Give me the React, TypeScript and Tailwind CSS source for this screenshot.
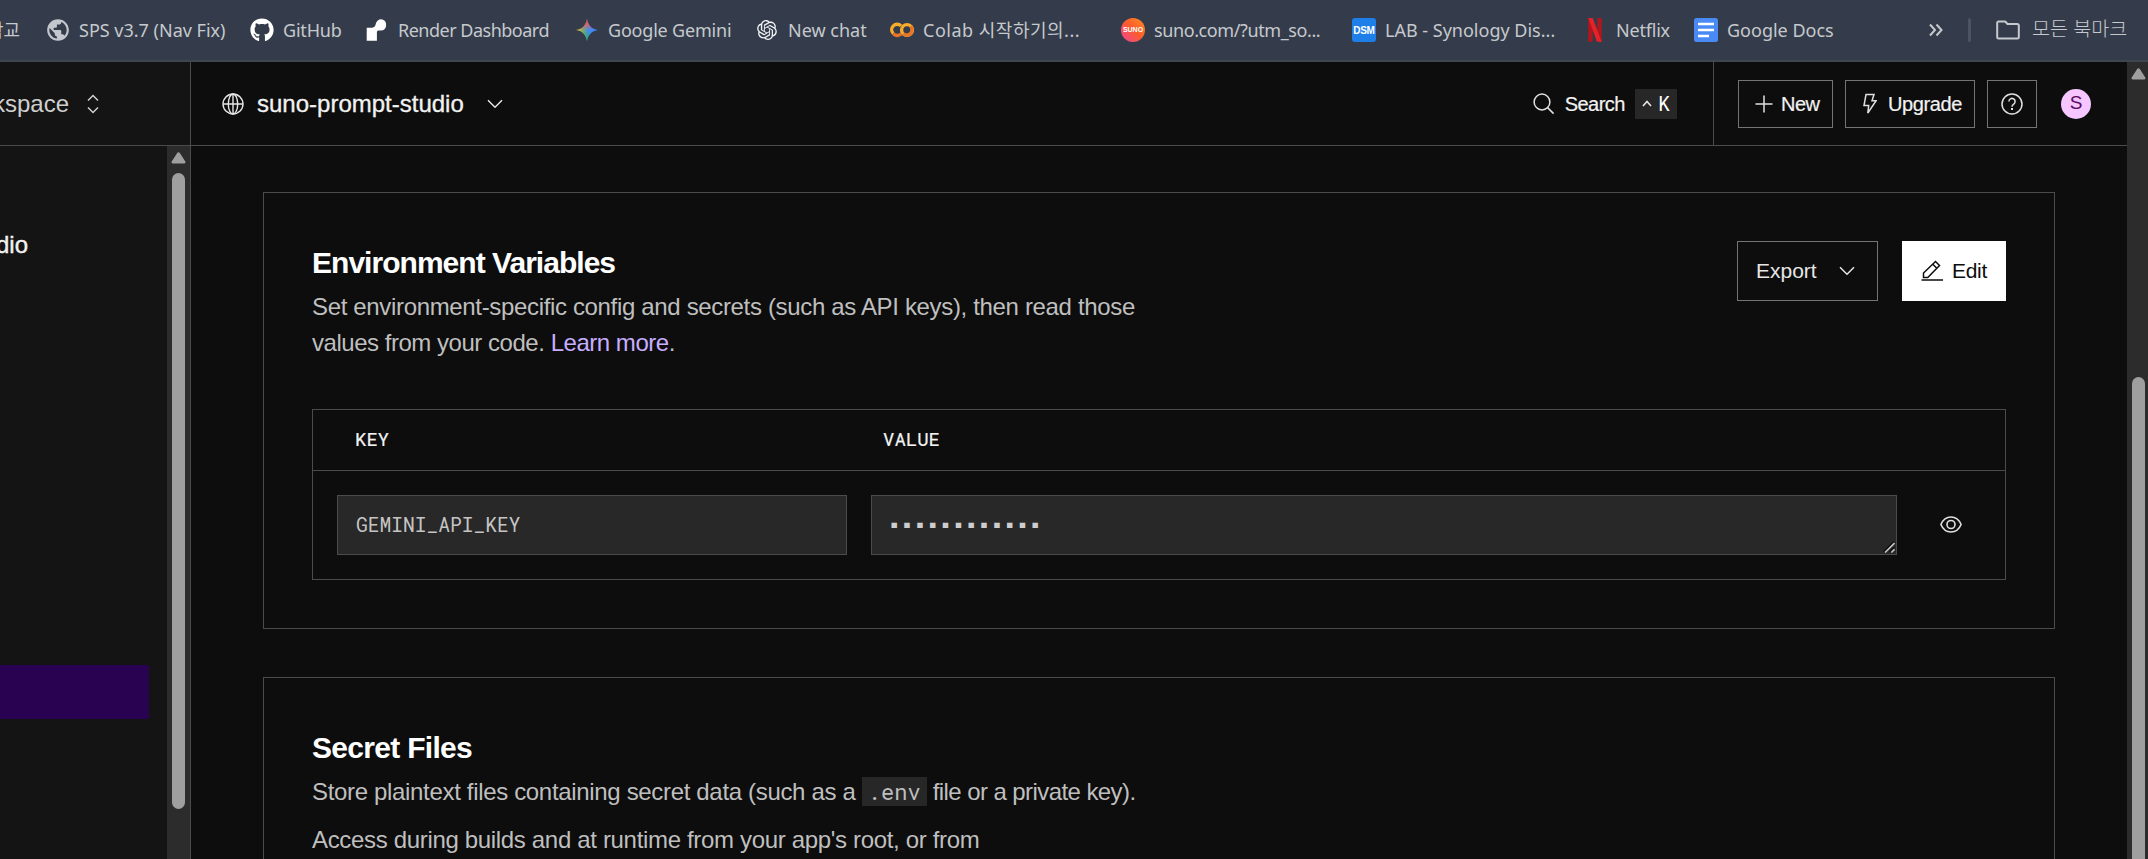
import type { ReactNode } from "react";
import { FaGithub } from "react-icons/fa";
import { MdPublic } from "react-icons/md";
import { RiOpenaiFill } from "react-icons/ri";

function RenderLogo() {
  return (
    <svg width="22" height="22" viewBox="0 0 22 22" fill="#fff">
      <path d="M15.500 0.300a5.900 5.900 0 0 0-5.900 5.200c-.3 1.800-1.500 3-3.400 3.200H0.700V21.700h10.200V13.200c0-1 .8-1.700 1.800-1.700h2.800a5.700 5.700 0 0 0 0-11.200z" />
    </svg>
  );
}

function GeminiLogo() {
  return (
    <svg width="22" height="24" viewBox="0 0 22 24">
      <defs>
        <linearGradient id="gem-base" x1="0" y1="0.500" x2="1" y2="0.500">
          <stop offset="0" stopColor="#f5c028" />
          <stop offset="0.350" stopColor="#6fa87a" />
          <stop offset="0.550" stopColor="#3f8cf0" />
          <stop offset="1" stopColor="#3a86ff" />
        </linearGradient>
        <linearGradient id="gem-red" x1="0.500" y1="0" x2="0.500" y2="0.500">
          <stop offset="0" stopColor="#f0433f" />
          <stop offset="0.500" stopColor="#ee5b55" stopOpacity="0.800" />
          <stop offset="1" stopColor="#ee5b55" stopOpacity="0" />
        </linearGradient>
        <linearGradient id="gem-green" x1="0.500" y1="1" x2="0.500" y2="0.550">
          <stop offset="0" stopColor="#2fae55" />
          <stop offset="1" stopColor="#2fae55" stopOpacity="0" />
        </linearGradient>
      </defs>
      {["url(#gem-base)", "url(#gem-red)", "url(#gem-green)"].map((f) => (
        <path key={f} fill={f} d="M11 1c.9 6 4.600 10 11 11-6.400 1-10.100 5-11 11-.9-6-4.600-10-11-11C6.400 11 10.100 7 11 1z" />
      ))}
    </svg>
  );
}

function ColabLogo() {
  return (
    <svg width="24" height="16" viewBox="0 0 24 16" fill="none" strokeWidth="3.400">
      <path d="M11 3.900A5.400 5.400 0 0 0 3.300 11.600" stroke="#f9ab2a" />
      <path d="M3.300 11.600A5.400 5.400 0 0 0 11 12.100" stroke="#e8742a" />
      <circle cx="17" cy="8" r="5.400" stroke="#f9ab2a" />
      <path d="M20.800 4.200A5.400 5.400 0 0 1 13.200 11.800" stroke="#e8742a" />
    </svg>
  );
}

function NetflixLogo() {
  return (
    <svg width="14" height="24" viewBox="0 0 14 24">
      <path d="M0.300 0h4.400v23.500l-4.400.5zM9.300 0h4.400v24l-4.400-.5z" fill="#b1161c" />
      <path d="M0.300 0h4.400l9 24-4.800-.6z" fill="#e5222a" />
    </svg>
  );
}

function DocsLogo() {
  return (
    <svg width="24" height="24" viewBox="0 0 24 24">
      <rect width="24" height="24" rx="2.500" fill="#4a8af4" />
      <path d="M4 6h16M4 12h16M4 18h11" stroke="#fff" strokeWidth="2.400" />
    </svg>
  );
}

const bookmarks: { icon: ReactNode; label: string; box: string; text: string }[] = [
  { icon: <MdPublic size={26} color="#c3c7cd" className="shrink-0" />, label: "SPS v3.7 (Nav Fix)", box: "w-[204px]", text: "" },
  { icon: <FaGithub size={24} color="#fff" />, label: "GitHub", box: "w-[115px]", text: "tracking-[-0.2px]" },
  { icon: <RenderLogo />, label: "Render Dashboard", box: "w-[210px]", text: "tracking-[-0.5px]" },
  { icon: <GeminiLogo />, label: "Google Gemini", box: "w-[180px]", text: "tracking-[-0.2px]" },
  { icon: <RiOpenaiFill size={24} color="#f2f3f5" className="shrink-0" />, label: "New chat", box: "w-[135px]", text: "" },
  { icon: <ColabLogo />, label: "Colab 시작하기의...", box: "w-[231px]", text: "tracking-[0.5px]" },
  {
    icon: (
      <span className="flex size-6 items-center justify-center rounded-full bg-linear-to-tr from-[#f0408c] via-[#fb5a2c] to-[#ff8a20] font-['Liberation_Sans',sans-serif] text-[7px] font-bold text-white">
        SUNO
      </span>
    ),
    label: "suno.com/?utm_so...",
    box: "w-[231px]",
    text: "tracking-[-0.4px]",
  },
  {
    icon: (
      <span className="flex size-6 items-center justify-center rounded-[3px] bg-[#1f7fe8] font-['Liberation_Sans',sans-serif] text-[10px] font-bold tracking-[-0.3px] text-white">
        DSM
      </span>
    ),
    label: "LAB - Synology Dis...",
    box: "w-[231px]",
    text: "",
  },
  { icon: <NetflixLogo />, label: "Netflix", box: "w-[111px]", text: "tracking-[-0.2px]" },
  { icon: <DocsLogo />, label: "Google Docs", box: "w-[235px]", text: "" },
];

function BookmarkBar() {
  return (
    <div className="flex h-[62px] shrink-0 items-center overflow-hidden border-b-2 border-[#3e474f] bg-[#343c4b] font-['Noto_Sans','Noto_Sans_CJK_KR',sans-serif] text-[18px] whitespace-nowrap text-[#c6c9cd]">
      <div className="flex w-[46px] shrink-0">
        <span className="flex w-5 justify-end">학교</span>
      </div>
      {bookmarks.map((b) => (
        <div key={b.label} className={`flex shrink-0 items-center gap-[9px] ${b.box}`}>
          <span className="flex w-6 shrink-0 items-center justify-center">{b.icon}</span>
          <span className={b.text}>{b.label}</span>
        </div>
      ))}
      <svg width="14" height="14" viewBox="0 0 14 14" fill="none" stroke="#c6c9cd" strokeWidth="2">
        <path d="M1 1.500L6 7l-5 5.500M7.500 1.500L12.500 7l-5 5.500" />
      </svg>
      <span className="ml-[25px] h-6 w-[3px] shrink-0 rounded-full bg-[#4b5464]" />
      <svg className="ml-[25px] shrink-0" width="24" height="20" viewBox="0 0 24 20" fill="none" stroke="#c6c9cd" strokeWidth="2" strokeLinejoin="round">
        <path d="M1.200 3.200V17a1.500 1.500 0 0 0 1.500 1.500h18.600a1.500 1.500 0 0 0 1.500-1.500V5.500A1.500 1.500 0 0 0 21.300 4h-9.800L9.200 1.500H2.700a1.500 1.500 0 0 0-1.500 1.700z" />
      </svg>
      <span className="ml-3 pb-[2px] text-[19.6px] font-light">모든 북마크</span>
    </div>
  );
}

function Chevron() {
  return (
    <svg width="16" height="10" viewBox="0 0 16 10" fill="none" stroke="#e6e6e6" strokeWidth="1.500">
      <path d="M1 1.300l7 7 7-7" />
    </svg>
  );
}

function ArrowUp() {
  return (
    <svg className="shrink-0" width="15" height="12" viewBox="0 0 15 12" fill="#9f9f9f">
      <path d="M6.200 0.900a1.500 1.500 0 0 1 2.600 0l5.500 8.700a1.200 1.200 0 0 1-1 1.900H1.700a1.200 1.200 0 0 1-1-1.900z" />
    </svg>
  );
}

function Header() {
  return (
    <header className="flex h-[84px] shrink-0 border-b border-[#4b4b4b] text-[#f2f2f2]">
      <div className="flex flex-1 items-center">
        <svg className="ml-[31px]" width="22" height="22" viewBox="0 0 22 22" fill="none" stroke="#e6e6e6" strokeWidth="1.400">
          <circle cx="11" cy="11" r="10" />
          <ellipse cx="11" cy="11" rx="4.700" ry="10" />
          <path d="M1 11h20M11 1v20" />
        </svg>
        <span className="ml-[13px] text-[24px] [-webkit-text-stroke:0.3px_#f2f2f2]">suno-prompt-studio</span>
        <span className="ml-[23px]">
          <Chevron />
        </span>
        <div className="mr-[36px] ml-auto flex items-center">
          <svg width="22" height="22" viewBox="0 0 22 22" fill="none" stroke="#e0e0e0" strokeWidth="1.500">
            <circle cx="9" cy="9" r="7.900" />
            <path d="M14.600 14.600l6 6" />
          </svg>
          <span className="ml-[10px] text-[20px] tracking-[-0.5px] [-webkit-text-stroke:0.2px_#f2f2f2]">Search</span>
          <span className="ml-[10px] flex h-[30px] w-[42px] items-center justify-end gap-[6px] bg-[#272727] pr-[7px] font-['Roboto_Mono','Liberation_Mono',monospace] text-[19.5px] text-white">
            <svg width="10" height="7" viewBox="0 0 10 7" fill="none" stroke="#e6e6e6" strokeWidth="1.600">
              <path d="M1 6l4-4.500L9 6" />
            </svg>
            K
          </span>
        </div>
      </div>
      <div className="flex items-center border-l border-[#4b4b4b] pr-[36px] pl-6 text-[20px] [-webkit-text-stroke:0.2px_#f2f2f2]">
        <button className="flex h-12 w-[95px] items-center border border-[#747474] pl-4">
          <svg width="18" height="18" viewBox="0 0 18 18" stroke="#e0e0e0" strokeWidth="1.500">
            <path d="M9 0.500v17M0.500 9h17" />
          </svg>
          <span className="ml-2 tracking-[-0.5px]">New</span>
        </button>
        <button className="ml-3 flex h-12 w-[130px] items-center border border-[#747474] pl-[17px]">
          <svg width="14" height="22" viewBox="0 0 14 22" fill="none" stroke="#e0e0e0" strokeWidth="1.500">
            <path d="M3 1.500h8l-2 6.300h4L4.800 20l.9-7.500H1z" />
          </svg>
          <span className="ml-[11px] tracking-[-0.4px]">Upgrade</span>
        </button>
        <button className="ml-3 flex h-12 w-[50px] items-center justify-center border border-[#747474]">
          <svg width="22" height="22" viewBox="0 0 22 22" fill="none" stroke="#e0e0e0" strokeWidth="1.500">
            <circle cx="11" cy="11" r="10" />
            <path d="M7.900 8.600a3.100 3.100 0 1 1 4.800 2.500c-1.100.7-1.700 1.300-1.700 2.600" />
            <path d="M11 15.100v2" strokeWidth="2" />
          </svg>
        </button>
        <span className="ml-6 flex size-[30px] items-center justify-center rounded-full bg-[#f5c6ff] text-[19px] text-[#5a0a5e] [-webkit-text-stroke:0px]">S</span>
      </div>
    </header>
  );
}

function Sidebar() {
  return (
    <aside className="flex w-[191px] shrink-0 flex-col border-r border-[#4b4b4b] bg-[#141414]">
      <div className="flex h-[84px] shrink-0 items-center overflow-hidden border-b border-[#4b4b4b] text-[24px] text-[#cfcfcf]">
        <span className="flex w-[69px] justify-end">Workspace</span>
        <svg className="ml-[18px]" width="12" height="20" viewBox="0 0 12 20" fill="none" stroke="#cfcfcf" strokeWidth="1.500">
          <path d="M1 6.500l5-5 5 5M1 13.500l5 5 5-5" />
        </svg>
      </div>
      <div className="flex min-h-0 flex-1">
        <div className="flex w-[167px] flex-col overflow-hidden pt-[81px]">
          <span className="flex w-7 justify-end text-[24px] leading-9 whitespace-nowrap text-[#f2f2f2] [-webkit-text-stroke:0.4px_#f2f2f2]">
            suno-prompt-studio
          </span>
          <div className="mt-[402px] h-[54px] w-[149px] shrink-0 rounded-r-[2px] bg-[#290351]" />
        </div>
        <div className="flex w-[23px] flex-col items-center bg-[#2c2c2c] pt-[6px]">
          <ArrowUp />
          <div className="mt-[9px] h-[636px] w-[13px] shrink-0 rounded-full bg-[#9f9f9f]" />
        </div>
      </div>
    </aside>
  );
}

function EnvironmentCard() {
  return (
    <section className="shrink-0 border border-[#4b4b4b] p-12">
      <div className="flex items-start justify-between">
        <div>
          <h2 className="mb-[5px] pt-px text-[30px] leading-[42px] font-bold tracking-[-0.97px] text-white">Environment Variables</h2>
          <p className="text-[24px] leading-9 tracking-[-0.34px] text-[#bfbfbf]">
            Set environment-specific config and secrets (such as API keys), then read those
            <br />
            <span className="tracking-[-0.47px]">
              values from your code. <a className="text-[#c8aeff]">Learn more</a>.
            </span>
          </p>
        </div>
        <div className="flex gap-6 text-[21px]">
          <button className="flex h-[60px] w-[141px] items-center border border-[#747474] pl-[18px] text-[#e6e6e6]">
            Export
            <span className="ml-[22px]">
              <Chevron />
            </span>
          </button>
          <button className="flex h-[60px] w-[104px] items-center bg-white pl-[19px] text-[#0d0d0d]">
            <svg width="22" height="22" viewBox="0 0 22 22" fill="none" stroke="#0d0d0d" strokeWidth="1.500">
              <path d="M2.500 17.500v-4.500L14.500 1.500l4 4L6.800 17.500zM11.800 4.200l4 4" />
              <path d="M0.500 20h21.500" />
            </svg>
            <span className="ml-[9px] tracking-[-0.3px]">Edit</span>
          </button>
        </div>
      </div>
      <div className="mt-12 border border-[#4b4b4b] font-['Roboto_Mono','Liberation_Mono',monospace]">
        <div className="flex h-[61px] items-center border-b border-[#4b4b4b] pb-px pl-[42px] text-[19px] text-[#f2f2f2] [-webkit-text-stroke:0.2px_#f2f2f2]">
          <span className="w-[528px]">KEY</span>
          <span>VALUE</span>
        </div>
        <div className="flex h-[108px] items-center px-6">
          <div className="flex h-[60px] w-[510px] items-center border border-[#4b4b4b] bg-[#282828] pl-[18px] text-[19.6px] text-[#c4c4c4]">
            GEMINI_API_KEY
          </div>
          <div className="relative ml-6 flex h-[60px] w-[1026px] items-center border border-[#4b4b4b] bg-[#282828] pb-px pl-[18px] font-['DejaVu_Sans_Mono',monospace] text-[14px] tracking-[4.400px] text-[#cdcdcd]">
            ▪▪▪▪▪▪▪▪▪▪▪▪
            <svg className="absolute right-px bottom-px" width="12" height="12" viewBox="0 0 12 12" fill="none">
              <path d="M0.500 11L11 0.500M6.500 11L11 6.500" stroke="#0d0d0d" strokeWidth="1.500" />
              <path d="M2 11.500L11.500 2M8.300 11.500l3.200-3.200" stroke="#c4c4c4" strokeWidth="1.600" />
            </svg>
          </div>
          <svg className="mb-px ml-[43px]" width="22" height="17" viewBox="0 0 22 17" fill="none" stroke="#e0e0e0" strokeWidth="1.600">
            <path d="M0.900 8.500C3 3.500 6.500 1 11 1s8 2.500 10.100 7.500C19 13.500 15.500 16 11 16S3 13.500 0.900 8.500z" />
            <circle cx="11" cy="8.500" r="4" />
          </svg>
        </div>
      </div>
    </section>
  );
}

function SecretFilesCard() {
  return (
    <section className="mt-12 shrink-0 border border-[#4b4b4b] p-12 text-[24px] leading-9 tracking-[-0.33px] text-[#bfbfbf]">
      <h2 className="mb-[5px] pt-px text-[30px] leading-[42px] font-bold tracking-[-0.7px] text-white">Secret Files</h2>
      <p className="h-9 whitespace-nowrap">
        Store plaintext files containing secret data (such as a{" "}
        <code className="bg-[#272727] px-[6px] font-['Roboto_Mono','Liberation_Mono',monospace] text-[22px] tracking-normal">.env</code>
        <span className="tracking-[-0.58px]"> file or a private key).</span>
      </p>
      <p className="mt-3">Access during builds and at runtime from your app's root, or from</p>
    </section>
  );
}

export default function App() {
  return (
    <div className="flex h-[859px] w-full flex-col overflow-hidden bg-[#0d0d0d] font-['Liberation_Sans',Arial,sans-serif]">
      <BookmarkBar />
      <div className="flex min-h-0 flex-1">
        <Sidebar />
        <div className="flex min-w-0 flex-1 flex-col">
          <Header />
          <main className="flex min-h-0 flex-1 flex-col overflow-hidden pt-[46px] pr-[72px] pl-[72px]">
            <EnvironmentCard />
            <SecretFilesCard />
          </main>
        </div>
        <div className="flex w-[21px] shrink-0 flex-col items-center overflow-hidden bg-[#2c2c2c] pt-[6px] pl-px">
          <ArrowUp />
          <div className="mt-[297px] h-[600px] w-[13px] shrink-0 rounded-full bg-[#9f9f9f]" />
        </div>
      </div>
    </div>
  );
}
